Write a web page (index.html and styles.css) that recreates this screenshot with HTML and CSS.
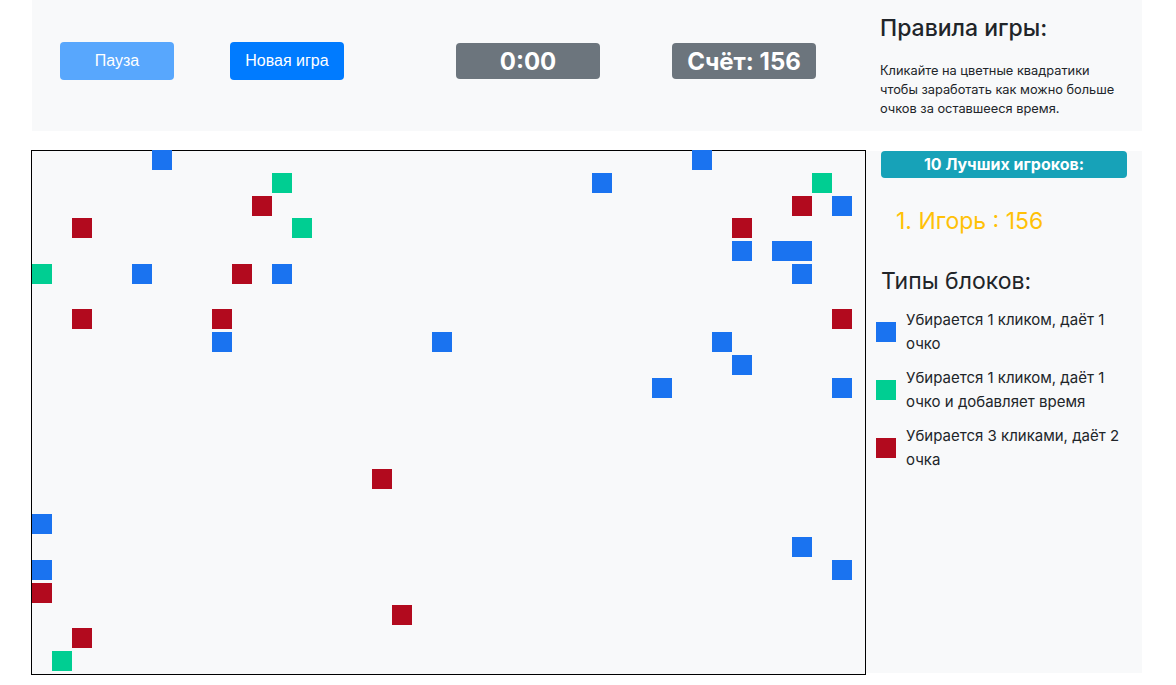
FILE: index.html
```html
<!DOCTYPE html>
<html lang="ru">
<head>
  <meta charset="UTF-8">
  <meta name="viewport" content="width=device-width, initial-scale=1.0">
  <title>Кликер</title>
  <link rel="stylesheet" href="styles.css">
</head>
<body>
  <div class="page">
    <header class="panel">
      <div class="controls">
        <button class="btn btn-pause" disabled>Пауза</button>
        <button class="btn btn-new">Новая игра</button>
        <span class="badge badge-time" id="timer">0:00</span>
        <span class="badge badge-score" id="score">Счёт: 156</span>
      </div>
      <div class="rules">
        <h4>Правила игры:</h4>
        <p>Кликайте на цветные квадратики чтобы заработать как можно больше очков за оставшееся время.</p>
      </div>
    </header>

    <main class="game">
      <div class="board" id="board"></div>

      <aside class="sidebar">
        <div class="leaders-title">10 Лучших игроков:</div>
        <ol class="leaders">
          <li>1. Игорь : 156</li>
        </ol>
        <h4 class="types-title">Типы блоков:</h4>
        <ul class="types">
          <li><span class="swatch blue"></span>Убирается 1 кликом, даёт 1 очко</li>
          <li><span class="swatch green"></span>Убирается 1 кликом, даёт 1 очко и добавляет время</li>
          <li><span class="swatch red"></span>Убирается 3 кликами, даёт 2 очка</li>
        </ul>
      </aside>
    </main>
  </div>

  <script src="script.js"></script>
</body>
</html>
```

FILE: styles.css
```css
:root {
  font-family: Inter, "Liberation Sans", sans-serif;
  color: #212529;
}
body {
  margin: 0;
  background: #fff;
}
.page {
  width: 1111px;
  margin-left: 31px;
}
.panel {
  display: flex;
  margin-left: 1px;
  height: 131px;
  box-sizing: border-box;
  background: #f8f9fa;
}
.controls {
  display: flex;
  align-items: center;
  align-self: flex-start;
  margin-top: 42px;
  width: 848px;
  padding-left: 28px;
  box-sizing: border-box;
}
.btn {
  width: 114px;
  height: 38px;
  border: 0;
  border-radius: 4px;
  color: #fff;
  font-family: "Liberation Sans", Arial, sans-serif;
  font-size: 16px;
  background: #007bff;
}
.btn-pause {
  background: #58a7fd;
}
.btn-new {
  margin-left: 56px;
}
.badge {
  display: flex;
  align-items: center;
  justify-content: center;
  width: 144px;
  height: 36px;
  border-radius: 4px;
  background: #6c757d;
  color: #fff;
  font-size: 24px;
  font-weight: 700;
}
.badge-time {
  margin-left: 112px;
}
.badge-score {
  margin-left: 72px;
}
.rules {
  padding-top: 14px;
}
h4 {
  margin: 0;
  font-size: 23px;
  font-weight: 500;
  line-height: 29px;
}
.rules p {
  margin: 18px 0 0;
  width: 240px;
  font-size: 12.8px;
  line-height: 19px;
}
.game {
  display: flex;
  align-items: flex-start;
  margin-top: 19px;
}
.board {
  position: relative;
  width: 833px;
  height: 523px;
  border: 1px solid #000;
  background: #f8f9fa;
}
.block {
  position: absolute;
  width: 20px;
  height: 20px;
}
.blue { background: #1a73f0; }
.green { background: #00ce92; }
.red { background: #b20a1e; }
.sidebar {
  width: 276px;
  height: 522px;
  margin-top: 1px;
  padding: 0 15px;
  box-sizing: border-box;
  background: #f8f9fa;
}
.leaders-title {
  height: 27px;
  line-height: 27px;
  border-radius: 4px;
  background: #17a2b8;
  color: #fff;
  text-align: center;
  font-size: 16px;
  font-weight: 700;
}
.leaders {
  list-style: none;
  margin: 28px 0 0;
  padding-left: 15px;
  color: #ffc107;
  font-size: 23px;
  line-height: 30px;
}
.types-title {
  margin-top: 31px;
  font-weight: 400;
}
.types {
  list-style: none;
  margin: 12px 0 0 -5px;
  padding: 0;
}
.types li {
  display: flex;
  align-items: center;
  gap: 10px;
  width: 254px;
  margin-bottom: 10px;
  font-size: 15px;
  line-height: 24px;
}
.swatch {
  flex: none;
  width: 20px;
  height: 20px;
}
```

FILE: script.js
```js
// [column, row, colour] for each block still on the board
const blocks = [
  [6, 0, 'blue'], [33, 0, 'blue'],
  [12, 1, 'green'], [28, 1, 'blue'], [39, 1, 'green'],
  [11, 2, 'red'], [38, 2, 'red'], [40, 2, 'blue'],
  [2, 3, 'red'], [13, 3, 'green'], [35, 3, 'red'],
  [35, 4, 'blue'], [37, 4, 'blue'], [38, 4, 'blue'],
  [0, 5, 'green'], [5, 5, 'blue'], [10, 5, 'red'], [12, 5, 'blue'], [38, 5, 'blue'],
  [2, 7, 'red'], [9, 7, 'red'], [40, 7, 'red'],
  [9, 8, 'blue'], [20, 8, 'blue'], [34, 8, 'blue'],
  [35, 9, 'blue'],
  [31, 10, 'blue'], [40, 10, 'blue'],
  [17, 14, 'red'],
  [0, 16, 'blue'],
  [38, 17, 'blue'],
  [0, 18, 'blue'], [40, 18, 'blue'],
  [0, 19, 'red'],
  [18, 20, 'red'],
  [2, 21, 'red'],
  [1, 22, 'green'],
];

const CELL_W = 20;
const CELL_H = 22.77;
const board = document.getElementById('board');

for (const [col, row, colour] of blocks) {
  const el = document.createElement('div');
  el.className = `block ${colour}`;
  el.style.left = `${col * CELL_W}px`;
  el.style.top = `${Math.round(row * CELL_H) - 1}px`;
  board.appendChild(el);
}
```
